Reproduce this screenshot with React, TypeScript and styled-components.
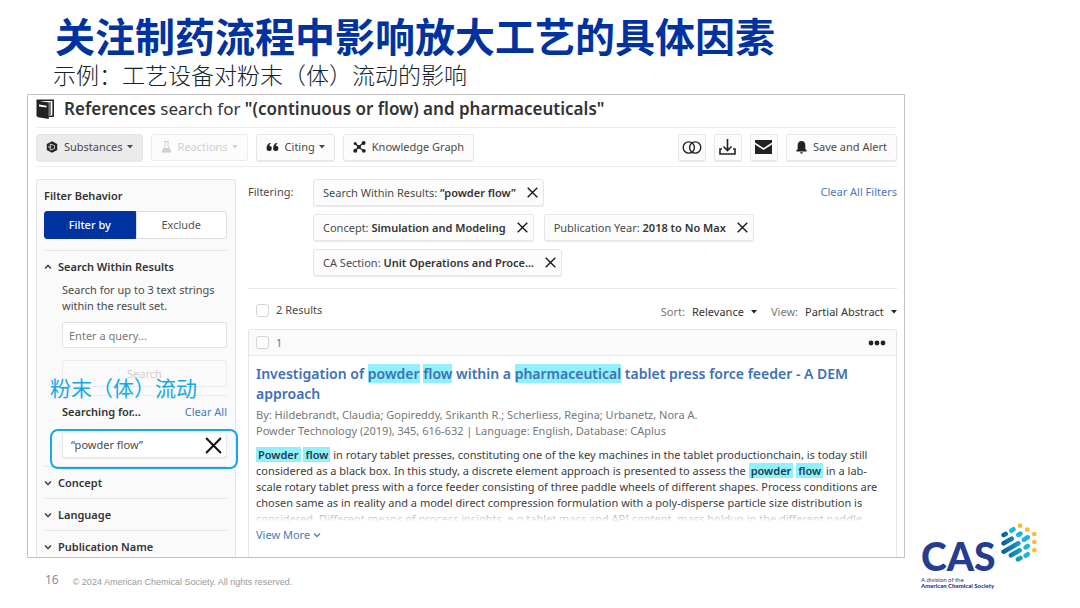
import React from 'react';
import styled, { createGlobalStyle, css } from 'styled-components';

const GlobalStyle = createGlobalStyle`
  *, *::before, *::after { box-sizing: border-box; }
  body {
    margin: 0;
    background: #fff;
    color: #4a4a4a;
    font: 11px/16px "Noto Sans", "Noto Sans CJK SC", sans-serif;
  }
  button, input, select { font: inherit; color: inherit; margin: 0; }
  h1, h2, h3, p { margin: 0; }
  a { color: #4a78bd; text-decoration: none; }
`;

const Slide = styled.main`
  display: flex;
  flex-direction: column;
  min-height: 100vh;
`;

const SlideTitle = styled.h1`
  padding: 10px 0 0 55px;
  font: 700 40px/50px "Noto Sans CJK SC", sans-serif;
  color: #0032a0;
`;

const SlideSubtitle = styled.p`
  padding-left: 53px;
  font: 300 23px/28px "Noto Sans CJK SC", sans-serif;
  color: #14232d;
`;

const SlideBody = styled.div`
  display: grid;
  grid-template-columns: minmax(0, 1fr) 159px;
  column-gap: 16px;
  margin: 6px 0 0 27px;
`;

const Frame = styled.section`
  border: 1px solid #c4c4c4;
  padding: 0 7px 0 8px;
  overflow: hidden;
`;

const ReferenceHeading = styled.h2`
  display: flex;
  align-items: center;
  gap: 9px;
  height: 33px;
  padding-bottom: 4px;
  border-bottom: 1px solid #ececec;
  font-size: 17px;
  line-height: 24px;
  font-weight: 400;
  color: #333;
  b { font-weight: 600; }
`;

const Toolbar = styled.div`
  display: flex;
  align-items: center;
  gap: 8px;
  height: 39px;
  border-bottom: 1px solid #ececec;
`;

const Spacer = styled.div`
  flex: 1;
`;

const raised = css`
  border: 1px solid #e6e6e6;
  border-radius: 3px;
  background: #fcfcfc;
  box-shadow: 0 1px 1px #eaeaea;
`;

const ToolButton = styled.button<{ $active?: boolean; $icon?: boolean }>`
  ${raised}
  display: flex;
  align-items: center;
  justify-content: center;
  gap: 6px;
  height: 27px;
  width: ${p => (p.$icon ? '28px' : 'auto')};
  padding: ${p => (p.$icon ? '0' : '0 9px')};
  background: ${p => (p.$active ? '#ebebeb' : '#fcfcfc')};
  white-space: nowrap;
  &:disabled { color: #cfcfcf; border-color: #ececec; box-shadow: none; }
  svg { flex: none; }
  span { margin-right: -2px; }
`;

const Columns = styled.div`
  display: grid;
  grid-template-columns: 200px minmax(0, 1fr);
  column-gap: 12px;
  padding-top: 12px;
`;

const Sidebar = styled.aside`
  margin-bottom: -5px;
  padding: 8px 8px 0 7px;
  border: 1px solid #e6e6e6;
  border-bottom: 0;
  border-radius: 3px 3px 0 0;
  background: #fafafa;
`;

const SidebarTitle = styled.h3`
  font-size: 11px;
  font-weight: 600;
  color: #333;
`;

const Toggle = styled.div`
  display: flex;
  height: 28px;
  margin: 7px 0 11px;
`;

const ToggleButton = styled.button<{ $on?: boolean }>`
  flex: 1;
  padding: 0;
  border: 1px solid ${p => (p.$on ? '#0032a0' : '#dcdcdc')};
  border-radius: ${p => (p.$on ? '3px 0 0 3px' : '0 3px 3px 0')};
  background: ${p => (p.$on ? '#0032a0' : '#fff')};
  color: ${p => (p.$on ? '#fff' : '#555')};
  font-weight: ${p => (p.$on ? 500 : 400)};
`;

const FacetSection = styled.section`
  border-top: 1px solid #e6e6e6;
`;

const FacetButton = styled.button`
  display: flex;
  align-items: center;
  gap: 6px;
  width: 100%;
  height: 31px;
  padding: 0;
  border: 0;
  background: none;
  font-weight: 600;
  color: #333;
`;

const FacetBody = styled.div`
  position: relative;
  padding: 0 0 8px 18px;
`;

const QueryInput = styled.input`
  display: block;
  width: 100%;
  height: 26px;
  margin: 8px 0 12px;
  padding: 0 6px;
  border: 1px solid #e2e2e2;
  border-radius: 2px;
  background: #fff;
  &::placeholder { color: #777; opacity: 1; }
`;

const SearchButton = styled.button`
  display: block;
  width: 100%;
  height: 27px;
  border: 1px solid #ececec;
  border-radius: 2px;
  background: #fafafa;
  &:disabled { color: #cfcfcf; }
`;

const SearchingFor = styled.div`
  display: flex;
  justify-content: space-between;
  margin-top: 8px;
  padding: 8px 0 12px;
  border-top: 1px solid #ececec;
  b { font-weight: 600; color: #333; }
`;

const ActiveQuery = styled.div`
  ${raised}
  position: relative;
  display: flex;
  align-items: center;
  justify-content: space-between;
  height: 26px;
  padding: 0 4px 0 8px;
  border-top-color: #f4f4f4;
  background: #fff;
`;

const Callout = styled.div`
  position: absolute;
  inset: -4px -12px -12px -13px;
  border: 2px solid #14a9e6;
  border-radius: 8px;
  pointer-events: none;
`;

const CalloutLabel = styled.p`
  position: absolute;
  left: 6px;
  top: 92px;
  font: 400 21px/26px "Noto Sans CJK SC", sans-serif;
  color: #14a9e6;
  white-space: nowrap;
`;

const IconButton = styled.button`
  display: flex;
  padding: 0;
  border: 0;
  background: none;
`;

const Main = styled.div`
  display: flex;
  flex-direction: column;
`;

const Filters = styled.div`
  display: flex;
  align-items: flex-start;
  padding-bottom: 12px;
  border-bottom: 1px solid #e6e6e6;
  > span { width: 65px; padding-top: 5px; }
  > a { margin-left: auto; padding-top: 5px; }
`;

const Chips = styled.div`
  display: flex;
  flex-wrap: wrap;
  gap: 8px 10px;
  width: 450px;
`;

const Chip = styled.div`
  ${raised}
  display: flex;
  align-items: center;
  gap: 11px;
  height: 27px;
  padding: 0 5px 0 9px;
  white-space: nowrap;
  b { font-weight: 600; color: #333; }
`;

const ResultsBar = styled.div`
  display: flex;
  align-items: center;
  height: 40px;
  padding: 2px 0 0 8px;
`;

const CheckLabel = styled.label`
  display: flex;
  align-items: center;
  gap: 7px;
`;

const Checkbox = styled.input.attrs({ type: 'checkbox' })`
  appearance: none;
  width: 13px;
  height: 13px;
  border: 1px solid #d4d4d4;
  border-radius: 3px;
  background: #fff;
`;

const SelectLabel = styled.label`
  display: flex;
  align-items: center;
  gap: 7px;
  margin-left: 14px;
  padding-top: 4px;
  color: #777;
  svg { color: #222; }
`;

const Select = styled.select`
  appearance: none;
  padding: 0;
  border: 0;
  background: none;
  color: #333;
`;

const Card = styled.article`
  flex: 1;
  border: 1px solid #e6e6e6;
  border-bottom: 0;
  border-radius: 3px 3px 0 0;
`;

const CardHeader = styled.header`
  display: flex;
  align-items: center;
  justify-content: space-between;
  height: 26px;
  padding: 0 10px 0 7px;
  border-bottom: 1px solid #e8e8e8;
  background: #fafafa;
  color: #777;
`;

const CardBody = styled.div`
  padding: 8px 8px 12px 7px;
`;

const ArticleTitle = styled.h3`
  font-size: 14px;
  line-height: 20px;
  font-weight: 600;
  a { color: #3c71b8; }
  mark { color: inherit; background: #92f0fc; }
`;

const Meta = styled.p`
  margin-top: 3px;
  color: #777;
`;

const Abstract = styled.p`
  position: relative;
  height: 75px;
  margin: 8px 0 5px;
  overflow: hidden;
  color: #3c3c3c;
  mark { padding: 0 2px; color: #173f4b; background: #92f0fc; font-weight: 600; }
  &::after {
    content: '';
    position: absolute;
    inset: auto 0 0;
    height: 16px;
    background: linear-gradient(#ffffff11, #fff);
  }
`;

const MoreLink = styled.a`
  display: inline-flex;
  align-items: center;
  gap: 3px;
`;

const Brand = styled.div`
  align-self: end;
  display: flex;
  align-items: flex-start;
  height: 35px;
`;

const BrandText = styled.div`
  width: 80px;
  padding-top: 12px;
  color: #253d8f;
  font: 900 39px/42px Lato, sans-serif;
`;

const BrandNote = styled.p`
  font: 400 6px/6px Lato, sans-serif;
  white-space: nowrap;
  b { font-weight: 900; }
`;

const Footer = styled.footer`
  display: flex;
  align-items: center;
  gap: 14px;
  padding: 13px 0 0 45px;
  color: #8f8f99;
  font-size: 12px;
  small { padding-top: 5px; font: 9px/12px "Liberation Sans", Arial, sans-serif; color: #999; }
`;

const Caret = () => (
  <svg width="6" height="4" viewBox="0 0 6 4" aria-hidden="true"><path d="M0 0h6L3 3.5z" fill="currentColor" /></svg>
);

const Chevron = ({ up }: { up?: boolean }) => (
  <svg width="8" height="8" viewBox="0 0 8 8" fill="none" stroke="currentColor" strokeWidth="1.3" aria-hidden="true">
    <path d={up ? 'M1 5.5 4 2.5 7 5.5' : 'M1 2.5 4 5.5 7 2.5'} />
  </svg>
);

const Cross = ({ size = 11, weight = 1.3 }: { size?: number; weight?: number }) => (
  <svg width={size} height={size} viewBox="0 0 11 11" fill="none" stroke="#111" strokeWidth={weight} aria-hidden="true">
    <path d="M.7.7 10.3 10.3M10.3.7.7 10.3" />
  </svg>
);

const BookIcon = () => (
  <svg width="19" height="20" viewBox="0 0 19 20" aria-hidden="true">
    <path d="M.5 1.5 12.8 3.6V20L2 18.2Q.5 17.9.5 16.5z" fill="#222" />
    <path d="M.5 2V1.2Q.6.5 1.5.5H18V18H12.8V16.4H16.4V2.1H4z" fill="#222" />
    <path d="M13.4 3.4 14.6 2.6V15.6L13.4 16.2z" fill="#222" />
    <path d="M3 5.6 10.5 6.8V8.6L3 7.4z" fill="#fff" />
  </svg>
);

const SubstanceIcon = () => (
  <svg width="12" height="12" viewBox="0 0 12 12" aria-hidden="true">
    <path d="M6 .3 11.2 3.1V8.9L6 11.7.8 8.9V3.1z" fill="#222" />
    <path d="M4.2 3 8.6 4.6V7.6L4.2 9zM2 6H5.4" fill="none" stroke="#ddd" strokeWidth=".9" />
  </svg>
);

const FlaskIcon = () => (
  <svg width="11" height="12" viewBox="0 0 11 12" aria-hidden="true">
    <path d="M3 .5H8M4 .5V5L1 11H10L7 5V.5" fill="none" stroke="#cfcfcf" />
    <path d="M3 7H8L10 11.3H1z" fill="#cfcfcf" />
  </svg>
);

const QuoteIcon = () => (
  <svg width="13" height="10" viewBox="0 0 13 10" fill="#222" aria-hidden="true">
    <path d="M4.4.8C1.8 1.6.6 3.6.6 6.2A2.6 2.6 0 1 0 3.2 3.8Q3.4 2.4 4.8 1.6z" />
    <path d="M11 .8C8.4 1.6 7.2 3.6 7.2 6.2A2.6 2.6 0 1 0 9.8 3.8Q10 2.4 11.4 1.6z" />
  </svg>
);

const GraphIcon = () => (
  <svg width="13" height="12" viewBox="0 0 13 12" fill="#222" aria-hidden="true">
    <path d="M2.2 2.2 5.5 6 10.5 1.8M5.5 6 2.2 9.8M5.5 6 10.5 9.8" fill="none" stroke="#222" strokeWidth="1.3" />
    <circle cx="2.2" cy="2.4" r="1.5" /><circle cx="10.6" cy="2" r="2" /><circle cx="6" cy="6" r="2" />
    <circle cx="2.3" cy="9.7" r="2" /><circle cx="10.8" cy="9.8" r="1.9" />
  </svg>
);

const RingsIcon = () => (
  <svg width="20" height="13" viewBox="0 0 20 13" fill="none" stroke="#222" strokeWidth="1.4" aria-hidden="true">
    <circle cx="6.8" cy="6.5" r="5.6" /><circle cx="13.2" cy="6.5" r="5.6" />
  </svg>
);

const DownloadIcon = () => (
  <svg width="17" height="16" viewBox="0 0 17 16" fill="none" stroke="#222" strokeWidth="1.6" aria-hidden="true">
    <path d="M8.5 0V11M4.5 7.5 8.5 11.5 12.5 7.5M3 10H1V15H16V10H14" />
  </svg>
);

const MailIcon = () => (
  <svg width="17" height="14" viewBox="0 0 17 14" fill="#222" aria-hidden="true">
    <path d="M0 0H17V2.6L8.5 8 0 2.6zM0 4.4 8.5 9.9 17 4.4V14H0z" />
  </svg>
);

const BellIcon = () => (
  <svg width="11" height="13" viewBox="0 0 11 13" fill="#222" aria-hidden="true">
    <path d="M5.5 0C3 0 1.7 1.8 1.7 4V8L.3 9.6V10.4H10.7V9.6L9.3 8V4C9.3 1.8 8 0 5.5 0zM4 11.3H7Q6.8 12.7 5.5 12.7T4 11.3z" />
  </svg>
);

const DotsIcon = () => (
  <svg width="18" height="6" viewBox="0 0 18 6" fill="#222" aria-hidden="true">
    <circle cx="3" cy="3" r="2.4" /><circle cx="9" cy="3" r="2.4" /><circle cx="15" cy="3" r="2.4" />
  </svg>
);

const BrandMark = () => (
  <svg width="36" height="40" viewBox="0 0 108 120" strokeWidth="14" strokeLinecap="round" aria-hidden="true">
    <defs>
      <linearGradient id="pill" gradientUnits="userSpaceOnUse" x1="0" y1="0" x2="64" y2="0">
        <stop offset="0" stopColor="#0b5a9c" /><stop offset="1" stopColor="#16a5c8" />
      </linearGradient>
    </defs>
    <g stroke="url(#pill)">
      <path d="M8 36 14 33M8 61 32 47M8 86 52 61M30 97 56 82M51 109 58 105" />
    </g>
    <path d="M31 23 37 19M52 36 58 32M69 50 80 43M74 73 80 69M74 98 80 94" stroke="#1fb2dc" />
    <g fill="#fbb934">
      <circle cx="57" cy="8" r="7" /><circle cx="79" cy="20" r="7" /><circle cx="100" cy="33" r="7" />
      <circle cx="100" cy="57" r="7" /><circle cx="100" cy="82" r="7" />
    </g>
  </svg>
);

const chips = [
  ['Search Within Results:', '“powder flow”'],
  ['Concept:', 'Simulation and Modeling'],
  ['Publication Year:', '2018 to No Max'],
  ['CA Section:', 'Unit Operations and Proce...'],
];

const facets = ['Concept', 'Language', 'Publication Name'];

export default function App() {
  return (
    <>
      <GlobalStyle />
      <Slide>
        <SlideTitle>关注制药流程中影响放大工艺的具体因素</SlideTitle>
        <SlideSubtitle>示例：工艺设备对粉末（体）流动的影响</SlideSubtitle>
        <SlideBody>
          <Frame>
            <ReferenceHeading>
              <BookIcon />
              <span><b>References</b> search for <b>"(continuous or flow) and pharmaceuticals"</b></span>
            </ReferenceHeading>
            <Toolbar>
              <ToolButton $active><SubstanceIcon /><span>Substances</span> <Caret /></ToolButton>
              <ToolButton disabled><FlaskIcon /><span>Reactions</span> <Caret /></ToolButton>
              <ToolButton><QuoteIcon /><span>Citing</span> <Caret /></ToolButton>
              <ToolButton><GraphIcon />Knowledge Graph</ToolButton>
              <Spacer />
              <ToolButton $icon aria-label="Combine"><RingsIcon /></ToolButton>
              <ToolButton $icon aria-label="Download"><DownloadIcon /></ToolButton>
              <ToolButton $icon aria-label="Email"><MailIcon /></ToolButton>
              <ToolButton><BellIcon />Save and Alert</ToolButton>
            </Toolbar>
            <Columns>
              <Sidebar>
                <SidebarTitle>Filter Behavior</SidebarTitle>
                <Toggle>
                  <ToggleButton $on>Filter by</ToggleButton>
                  <ToggleButton>Exclude</ToggleButton>
                </Toggle>
                <FacetSection>
                  <FacetButton aria-expanded="true"><Chevron up />Search Within Results</FacetButton>
                  <FacetBody>
                    <p>Search for up to 3 text strings within the result set.</p>
                    <QueryInput aria-label="Query" placeholder="Enter a query..." />
                    <SearchButton disabled>Search</SearchButton>
                    <CalloutLabel>粉末（体）流动</CalloutLabel>
                    <SearchingFor><b>Searching for...</b><a href="#clear">Clear All</a></SearchingFor>
                    <ActiveQuery>
                      “powder flow”
                      <IconButton aria-label="Remove query"><Cross size={17} /></IconButton>
                      <Callout />
                    </ActiveQuery>
                  </FacetBody>
                </FacetSection>
                {facets.map(name => (
                  <FacetSection key={name}>
                    <FacetButton aria-expanded="false"><Chevron />{name}</FacetButton>
                  </FacetSection>
                ))}
              </Sidebar>
              <Main>
                <Filters>
                  <span>Filtering:</span>
                  <Chips>
                    {chips.map(([label, value]) => (
                      <Chip key={label}>
                        <span>{label} <b>{value}</b></span>
                        <IconButton aria-label={`Remove ${value}`}><Cross /></IconButton>
                      </Chip>
                    ))}
                  </Chips>
                  <a href="#clear-filters">Clear All Filters</a>
                </Filters>
                <ResultsBar>
                  <CheckLabel><Checkbox />2 Results</CheckLabel>
                  <Spacer />
                  <SelectLabel>Sort: <Select><option>Relevance</option></Select><Caret /></SelectLabel>
                  <SelectLabel>View: <Select><option>Partial Abstract</option></Select><Caret /></SelectLabel>
                </ResultsBar>
                <Card>
                  <CardHeader>
                    <CheckLabel><Checkbox />1</CheckLabel>
                    <IconButton aria-label="More actions"><DotsIcon /></IconButton>
                  </CardHeader>
                  <CardBody>
                    <ArticleTitle>
                      <a href="#article">
                        Investigation of <mark>powder</mark> <mark>flow</mark> within a <mark>pharmaceutical</mark> tablet
                        press force feeder - A DEM approach
                      </a>
                    </ArticleTitle>
                    <Meta>
                      By: Hildebrandt, Claudia; Gopireddy, Srikanth R.; Scherliess, Regina; Urbanetz, Nora A.<br />
                      Powder Technology (2019), 345, 616-632 | Language: English, Database: CAplus
                    </Meta>
                    <Abstract>
                      <mark>Powder</mark> <mark>flow</mark> in rotary tablet presses, constituting one of the key machines
                      in the tablet productionchain, is today still considered as a black box. In this study, a discrete
                      element approach is presented to assess the <mark>powder</mark> <mark>flow</mark> in a lab-scale
                      rotary tablet press with a force feeder consisting of three paddle wheels of different shapes.
                      Process conditions are chosen same as in reality and a model direct compression formulation with a
                      poly-disperse particle size distribution is considered. Different means of process insights, e.g
                      tablet mass and API content, mass holdup in the different paddle...
                    </Abstract>
                    <MoreLink href="#more">View More <Chevron /></MoreLink>
                  </CardBody>
                </Card>
              </Main>
            </Columns>
          </Frame>
          <Brand>
            <BrandText>
              CAS
              <BrandNote>A division of the<br /><b>American Chemical Society</b></BrandNote>
            </BrandText>
            <BrandMark />
          </Brand>
        </SlideBody>
        <Footer>16 <small>© 2024 American Chemical Society. All rights reserved.</small></Footer>
      </Slide>
    </>
  );
}
